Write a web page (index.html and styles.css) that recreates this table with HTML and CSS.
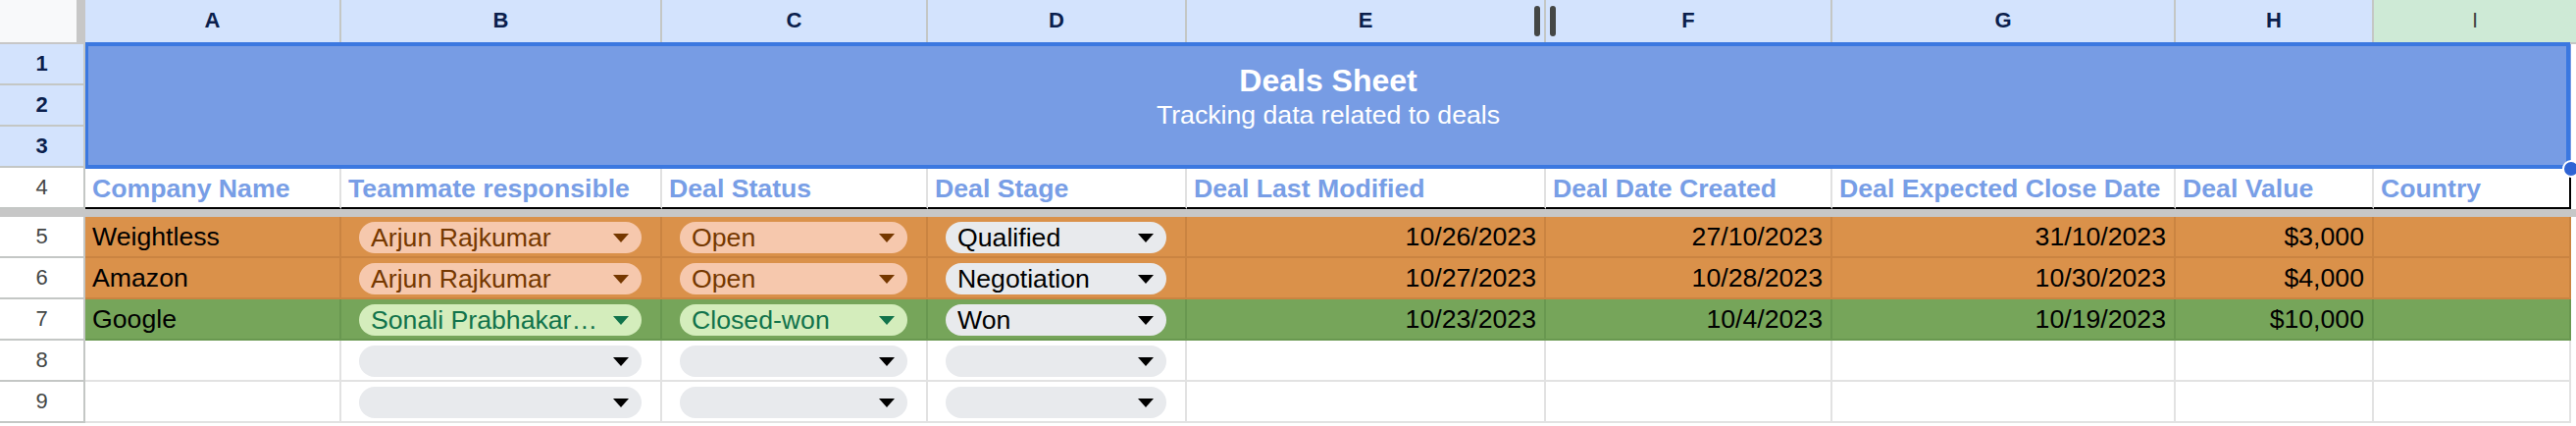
FILE: index.html
```html
<!DOCTYPE html>
<html lang="en">
<head>
<meta charset="utf-8">
<title>Deals Sheet</title>
<link rel="stylesheet" href="styles.css">
</head>
<body>
<div class="sheet">
  <div class="corner"></div>
  <div class="ch">A</div>
  <div class="ch">B</div>
  <div class="ch">C</div>
  <div class="ch">D</div>
  <div class="ch">E</div>
  <div class="ch">F</div>
  <div class="ch">G</div>
  <div class="ch">H</div>
  <div class="ch ch-i">I</div>

  <div class="rh sel">1</div>
  <div class="merged">
    <div class="title">Deals Sheet</div>
    <div class="subtitle">Tracking data related to deals</div>
  </div>
  <div class="rh sel">2</div>
  <div class="rh sel">3</div>

  <div class="rh rh4">4</div>
  <div class="hd">Company Name</div>
  <div class="hd">Teammate responsible</div>
  <div class="hd">Deal Status</div>
  <div class="hd">Deal Stage</div>
  <div class="hd">Deal Last Modified</div>
  <div class="hd">Deal Date Created</div>
  <div class="hd">Deal Expected Close Date</div>
  <div class="hd">Deal Value</div>
  <div class="hd hd-last">Country</div>

  <div class="freeze"></div>

  <div class="rh">5</div>
  <div class="c o">Weightless</div>
  <div class="c o"><div class="chip chip-o"><span class="chip-text">Arjun Rajkumar</span><svg class="arrow" viewBox="0 0 16 9"><path d="M0 0H16L8 9Z"/></svg></div></div>
  <div class="c o"><div class="chip chip-o"><span class="chip-text">Open</span><svg class="arrow" viewBox="0 0 16 9"><path d="M0 0H16L8 9Z"/></svg></div></div>
  <div class="c o"><div class="chip chip-n"><span class="chip-text">Qualified</span><svg class="arrow" viewBox="0 0 16 9"><path d="M0 0H16L8 9Z"/></svg></div></div>
  <div class="c o r">10/26/2023</div>
  <div class="c o r">27/10/2023</div>
  <div class="c o r">31/10/2023</div>
  <div class="c o r">$3,000</div>
  <div class="c o"></div>

  <div class="rh">6</div>
  <div class="c o">Amazon</div>
  <div class="c o"><div class="chip chip-o"><span class="chip-text">Arjun Rajkumar</span><svg class="arrow" viewBox="0 0 16 9"><path d="M0 0H16L8 9Z"/></svg></div></div>
  <div class="c o"><div class="chip chip-o"><span class="chip-text">Open</span><svg class="arrow" viewBox="0 0 16 9"><path d="M0 0H16L8 9Z"/></svg></div></div>
  <div class="c o"><div class="chip chip-n"><span class="chip-text">Negotiation</span><svg class="arrow" viewBox="0 0 16 9"><path d="M0 0H16L8 9Z"/></svg></div></div>
  <div class="c o r">10/27/2023</div>
  <div class="c o r">10/28/2023</div>
  <div class="c o r">10/30/2023</div>
  <div class="c o r">$4,000</div>
  <div class="c o"></div>

  <div class="rh">7</div>
  <div class="c g">Google</div>
  <div class="c g"><div class="chip chip-g"><span class="chip-text">Sonali Prabhakar…</span><svg class="arrow" viewBox="0 0 16 9"><path d="M0 0H16L8 9Z"/></svg></div></div>
  <div class="c g"><div class="chip chip-g"><span class="chip-text">Closed-won</span><svg class="arrow" viewBox="0 0 16 9"><path d="M0 0H16L8 9Z"/></svg></div></div>
  <div class="c g"><div class="chip chip-n"><span class="chip-text">Won</span><svg class="arrow" viewBox="0 0 16 9"><path d="M0 0H16L8 9Z"/></svg></div></div>
  <div class="c g r">10/23/2023</div>
  <div class="c g r">10/4/2023</div>
  <div class="c g r">10/19/2023</div>
  <div class="c g r">$10,000</div>
  <div class="c g"></div>

  <div class="rh">8</div>
  <div class="c"></div>
  <div class="c"><div class="chip chip-n chip-empty"><svg class="arrow" viewBox="0 0 16 9"><path d="M0 0H16L8 9Z"/></svg></div></div>
  <div class="c"><div class="chip chip-n chip-empty"><svg class="arrow" viewBox="0 0 16 9"><path d="M0 0H16L8 9Z"/></svg></div></div>
  <div class="c"><div class="chip chip-n chip-empty"><svg class="arrow" viewBox="0 0 16 9"><path d="M0 0H16L8 9Z"/></svg></div></div>
  <div class="c"></div>
  <div class="c"></div>
  <div class="c"></div>
  <div class="c"></div>
  <div class="c"></div>

  <div class="rh">9</div>
  <div class="c"></div>
  <div class="c"><div class="chip chip-n chip-empty"><svg class="arrow" viewBox="0 0 16 9"><path d="M0 0H16L8 9Z"/></svg></div></div>
  <div class="c"><div class="chip chip-n chip-empty"><svg class="arrow" viewBox="0 0 16 9"><path d="M0 0H16L8 9Z"/></svg></div></div>
  <div class="c"><div class="chip chip-n chip-empty"><svg class="arrow" viewBox="0 0 16 9"><path d="M0 0H16L8 9Z"/></svg></div></div>
  <div class="c"></div>
  <div class="c"></div>
  <div class="c"></div>
  <div class="c"></div>
  <div class="c"></div>

  <div class="selection"></div>
  <div class="sel-handle"></div>
  <div class="resize-bar resize-left"></div>
  <div class="resize-bar resize-right"></div>
</div>
</body>
</html>
```

FILE: styles.css
```css
* {
  box-sizing: border-box;
}

html, body {
  margin: 0;
  padding: 0;
}

body {
  width: 2626px;
  height: 434px;
  overflow: hidden;
  background: #ffffff;
  font-family: "Liberation Sans", Arial, sans-serif;
  font-size: 26.67px;
  color: #000000;
}

.sheet {
  position: relative;
  display: grid;
  grid-template-columns: 87px 261px 327px 271px 264px 366px 292px 350px 202px 201px;
  grid-template-rows: 45px 42px 42px 42px 42px 8px 42px 42px 42px 42px 42px;
  width: 2621px;
}

/* column headers */
.corner {
  background: #f8f9fa;
  border-right: 9px solid #c7c7c7;
  border-bottom: 2px solid #c7c7c7;
}

.ch {
  display: flex;
  align-items: center;
  justify-content: center;
  background: #d3e3fd;
  border-right: 2px solid #c4c7c5;
  border-bottom: 2px solid #c4c7c5;
  font-size: 22px;
  font-weight: bold;
  color: #0b1f4d;
  padding-bottom: 1px;
}

.ch-i {
  background: #ceead6;
  color: #444746;
  font-weight: normal;
  margin-right: -5px;
  border-right: none;
}

/* row headers */
.rh {
  grid-column: 1;
  display: flex;
  align-items: center;
  justify-content: center;
  background: #ffffff;
  border-right: 2px solid #c4c7c5;
  border-bottom: 2px solid #c4c7c5;
  font-size: 22px;
  color: #444746;
  padding-bottom: 1px;
}

.rh.sel {
  background: #d3e3fd;
  color: #0b1f4d;
  font-weight: bold;
}

/* merged title block */
.merged {
  grid-column: 2 / 11;
  grid-row: 2 / 5;
  background: #779ce4;
  color: #ffffff;
  text-align: center;
  padding-top: 19px;
}

.title {
  font-size: 32px;
  font-weight: bold;
  line-height: 37px;
}

.subtitle {
  font-size: 26.67px;
  line-height: 33px;
}

/* header row 4 */
.hd {
  display: flex;
  align-items: center;
  padding: 0 7px;
  border-right: 2px solid #e1e1e1;
  border-bottom: 2px solid #000000;
  font-weight: bold;
  color: #789ee6;
  white-space: nowrap;
  overflow: hidden;
  line-height: 40px;
  padding-top: 1px;
}

.hd-last {
  border-right-color: #000000;
}

.freeze {
  grid-column: 1 / 11;
  background: #c7c7c7;
  margin-right: -5px;
}

/* data cells */
.c {
  display: flex;
  align-items: center;
  padding: 0 7px;
  border-right: 2px solid rgba(0, 0, 0, 0.115);
  border-bottom: 2px solid rgba(0, 0, 0, 0.115);
  line-height: 40px;
  white-space: nowrap;
  overflow: hidden;
}

.c.r {
  justify-content: flex-end;
  padding-right: 8px;
}

.c.o {
  background: #da914a;
  border-color: rgba(90, 45, 0, 0.12);
}

.c.g {
  background: #76a55a;
  border-color: rgba(20, 60, 10, 0.12);
}

/* dropdown chips */
.chip {
  flex: 1;
  display: flex;
  align-items: center;
  justify-content: space-between;
  height: 32px;
  margin: 2px 12px 0 11px;
  padding: 0 13px 0 12px;
  border-radius: 16px;
  line-height: 32px;
}

.chip-text {
  white-space: nowrap;
  overflow: hidden;
}

.chip-empty {
  justify-content: flex-end;
}

.chip-o {
  background: #f6c8ad;
  color: #753800;
}

.chip-g {
  background: #d4edbc;
  color: #11734b;
}

.chip-n {
  background: #e8eaed;
  color: #000000;
}

.arrow {
  flex: none;
  width: 16px;
  height: 9px;
  fill: currentColor;
}

/* overlays */
.selection {
  position: absolute;
  left: 87px;
  top: 43px;
  width: 2533px;
  height: 129px;
  border: 4px solid #3b78e0;
  border-left-width: 3px;
  pointer-events: none;
}

.sel-handle {
  position: absolute;
  left: 2612px;
  top: 163px;
  width: 18px;
  height: 18px;
  border-radius: 50%;
  background: #2f64d4;
  border: 2px solid #ffffff;
}

.resize-bar {
  position: absolute;
  top: 6px;
  width: 6px;
  height: 31px;
  border-radius: 3px;
  background: #444746;
}

.resize-left {
  left: 1564px;
}

.resize-right {
  left: 1580px;
}
```
